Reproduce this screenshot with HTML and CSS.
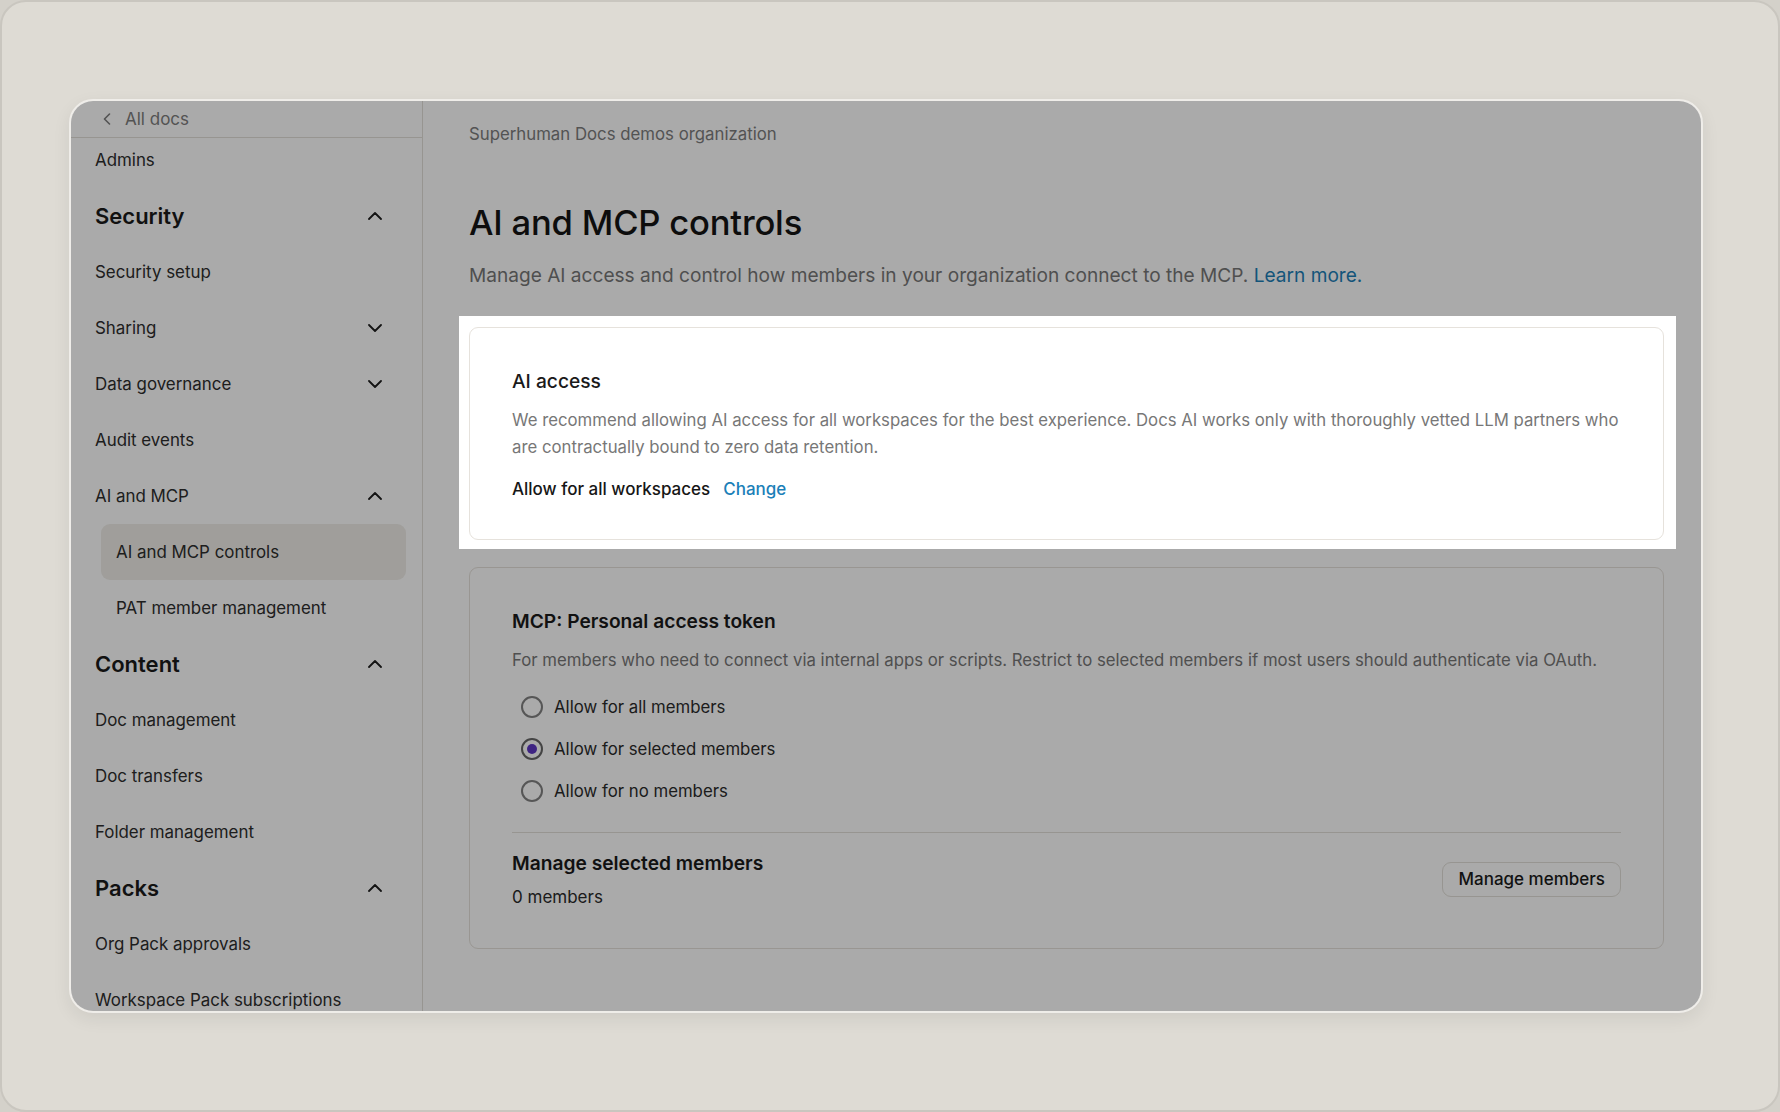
FILE: index.html
```html
<!DOCTYPE html>
<html lang="en">
<head>
<meta charset="utf-8">
<title>AI and MCP controls</title>
<link rel="stylesheet" href="styles.css">
</head>
<body>
<div class="frame">
  <div class="window">
    <aside class="sidebar">
      <div class="side-head">
        <svg class="back" width="8" height="12" viewBox="0 0 8 12"><path d="M6.5 1 L1.5 6 L6.5 11" fill="none" stroke="currentColor" stroke-width="1.6" stroke-linecap="round" stroke-linejoin="round"/></svg>
        <span>All docs</span>
      </div>
      <nav class="side-nav">
        <div class="nav-item">Admins</div>
        <div class="nav-group"><span>Security</span><svg class="chev" width="14" height="8" viewBox="0 0 14 8"><path d="M1 7 L7 1 L13 7" fill="none" stroke="currentColor" stroke-width="1.8" stroke-linecap="round" stroke-linejoin="round"/></svg></div>
        <div class="nav-item">Security setup</div>
        <div class="nav-item"><span>Sharing</span><svg class="chev" width="14" height="8" viewBox="0 0 14 8"><path d="M1 1 L7 7 L13 1" fill="none" stroke="currentColor" stroke-width="1.8" stroke-linecap="round" stroke-linejoin="round"/></svg></div>
        <div class="nav-item"><span>Data governance</span><svg class="chev" width="14" height="8" viewBox="0 0 14 8"><path d="M1 1 L7 7 L13 1" fill="none" stroke="currentColor" stroke-width="1.8" stroke-linecap="round" stroke-linejoin="round"/></svg></div>
        <div class="nav-item">Audit events</div>
        <div class="nav-item"><span>AI and MCP</span><svg class="chev" width="14" height="8" viewBox="0 0 14 8"><path d="M1 7 L7 1 L13 7" fill="none" stroke="currentColor" stroke-width="1.8" stroke-linecap="round" stroke-linejoin="round"/></svg></div>
        <div class="nav-sub active">AI and MCP controls</div>
        <div class="nav-sub">PAT member management</div>
        <div class="nav-group"><span>Content</span><svg class="chev" width="14" height="8" viewBox="0 0 14 8"><path d="M1 7 L7 1 L13 7" fill="none" stroke="currentColor" stroke-width="1.8" stroke-linecap="round" stroke-linejoin="round"/></svg></div>
        <div class="nav-item">Doc management</div>
        <div class="nav-item">Doc transfers</div>
        <div class="nav-item">Folder management</div>
        <div class="nav-group"><span>Packs</span><svg class="chev" width="14" height="8" viewBox="0 0 14 8"><path d="M1 7 L7 1 L13 7" fill="none" stroke="currentColor" stroke-width="1.8" stroke-linecap="round" stroke-linejoin="round"/></svg></div>
        <div class="nav-item">Org Pack approvals</div>
        <div class="nav-item">Workspace Pack subscriptions</div>
      </nav>
    </aside>
    <main class="main">
      <div class="org">Superhuman Docs demos organization</div>
      <h1 class="title">AI and MCP controls</h1>
      <p class="subtitle">Manage AI access and control how members in your organization connect to the MCP. <a class="link" href="#">Learn more.</a></p>

      <div class="spotlight">
        <section class="card">
          <h2 class="card-title">AI access</h2>
          <p class="card-desc">We recommend allowing AI access for all workspaces for the best experience. Docs AI works only with thoroughly vetted LLM partners who are contractually bound to zero data retention.</p>
          <div class="setting"><span>Allow for all workspaces</span><a class="change" href="#">Change</a></div>
        </section>
      </div>

      <section class="card card2">
        <h2 class="card-title strong">MCP: Personal access token</h2>
        <p class="card-desc">For members who need to connect via internal apps or scripts. Restrict to selected members if most users should authenticate via OAuth.</p>
        <div class="radios">
          <div class="radio-row"><span class="radio"></span><span>Allow for all members</span></div>
          <div class="radio-row"><span class="radio checked"></span><span>Allow for selected members</span></div>
          <div class="radio-row"><span class="radio"></span><span>Allow for no members</span></div>
        </div>
        <div class="divider"></div>
        <div class="members-row">
          <div>
            <div class="card-title strong">Manage selected members</div>
            <div class="count">0 members</div>
          </div>
          <button class="btn" type="button">Manage members</button>
        </div>
      </section>
    </main>
  </div>
</div>
</body>
</html>
```
FILE: styles.css
```css
* { box-sizing: border-box; }
html, body { margin: 0; padding: 0; }
body {
  background: #d4d1ca;
  font-family: Inter, "Noto Sans", "Liberation Sans", sans-serif;
  color: #2b2b2b;
}
.frame {
  height: 1112px;
  border: 2px solid #c9c6bf;
  border-radius: 26px;
  background: #dedbd4;
  padding: 97px 75px 97px 67px;
  display: flex;
}
.window {
  flex: 1;
  display: flex;
  border: 2px solid #efede9;
  border-radius: 24px;
  overflow: hidden;
  background: #ffffff;
  box-shadow: 0 6px 18px rgba(0, 0, 0, 0.07);
}

/* Sidebar */
.sidebar {
  width: 352px;
  flex-shrink: 0;
  border-right: 1px solid #e3e0da;
  display: flex;
  flex-direction: column;
  overflow: hidden;
}
.side-head {
  height: 37px;
  flex-shrink: 0;
  border-bottom: 1px solid #e3e0da;
  display: flex;
  align-items: center;
  gap: 14px;
  padding-left: 32px;
  color: #7d7d7d;
  font-size: 17px;
}
.back { display: block; }
.side-nav {
  margin-top: -6px;
  display: flex;
  flex-direction: column;
}
.nav-item, .nav-group, .nav-sub {
  height: 56px;
  flex-shrink: 0;
  display: flex;
  align-items: center;
  justify-content: space-between;
  padding: 0 40px 0 24px;
  font-size: 16.9px;
  color: #2d2d2d;
}
.nav-group {
  font-size: 22px;
  font-weight: 600;
  color: #1a1a1a;
}
.chev { color: #1e1e1e; display: block; }
.nav-sub {
  margin: 0 16px 0 30px;
  padding-left: 15px;
  border-radius: 9px;
}
.nav-sub.active { background: #f0eee9; }

/* Main */
.main {
  flex: 1;
  padding: 21px 37px 0 46px;
  min-width: 0;
}
.org {
  font-size: 16.8px;
  line-height: 24px;
  color: #7d7d7d;
}
.title {
  margin: 55px 0 0;
  font-size: 34.6px;
  line-height: 42px;
  font-weight: 500;
  color: #141414;
  letter-spacing: -0.2px;
}
.subtitle {
  margin: 18px 0 0;
  font-size: 19.1px;
  line-height: 28px;
  color: #777;
}
.link { color: #1d7fb8; text-decoration: none; }

.spotlight {
  position: relative;
  z-index: 2;
  background: #ffffff;
  margin: 27px -12px -9px -10px;
  padding: 11px 12px 9px 10px;
  box-shadow: 0 0 0 4000px rgba(0, 0, 0, 0.333);
}
.card {
  border: 1px solid #e6e2dc;
  border-radius: 9px;
  background: #ffffff;
  padding: 39px 42px 37px 42px;
}
.card2 {
  margin-top: 27px;
  padding-bottom: 39px;
}
.card-title {
  margin: 0;
  font-size: 19.2px;
  line-height: 28px;
  font-weight: 500;
  color: #1a1a1a;
}
.card-title.strong { font-weight: 600; }
.card-desc {
  margin: 12px 0 0;
  font-size: 16.75px;
  line-height: 27px;
  color: #777;
}
.setting {
  margin-top: 15px;
  font-size: 17px;
  line-height: 26px;
  font-weight: 500;
  color: #161616;
  display: flex;
  gap: 13px;
}
.change { color: #1b80b8; text-decoration: none; }

.radios {
  margin-top: 12px;
  display: flex;
  flex-direction: column;
}
.radio-row {
  height: 42px;
  display: flex;
  align-items: center;
  gap: 11px;
  padding-left: 9px;
  font-size: 16.8px;
  color: #2b2b2b;
}
.radio {
  width: 22px;
  height: 22px;
  border-radius: 50%;
  border: 2px solid #828282;
  display: flex;
  align-items: center;
  justify-content: center;
  flex-shrink: 0;
}
.radio.checked { border-color: #666; }
.radio.checked::after {
  content: "";
  width: 10px;
  height: 10px;
  border-radius: 50%;
  background: #5e36c4;
}
.divider {
  margin-top: 20px;
  height: 1px;
  background: #e3e0da;
}
.members-row {
  margin-top: 16px;
  display: flex;
  align-items: center;
  justify-content: space-between;
}
.count {
  margin-top: 8px;
  font-size: 17px;
  line-height: 24px;
  color: #2b2b2b;
}
.btn {
  height: 35px;
  padding: 0 15px;
  border: 1px solid #e3e0da;
  border-radius: 9px;
  background: #ffffff;
  font-family: inherit;
  font-size: 17px;
  font-weight: 500;
  color: #1a1a1a;
}
```
